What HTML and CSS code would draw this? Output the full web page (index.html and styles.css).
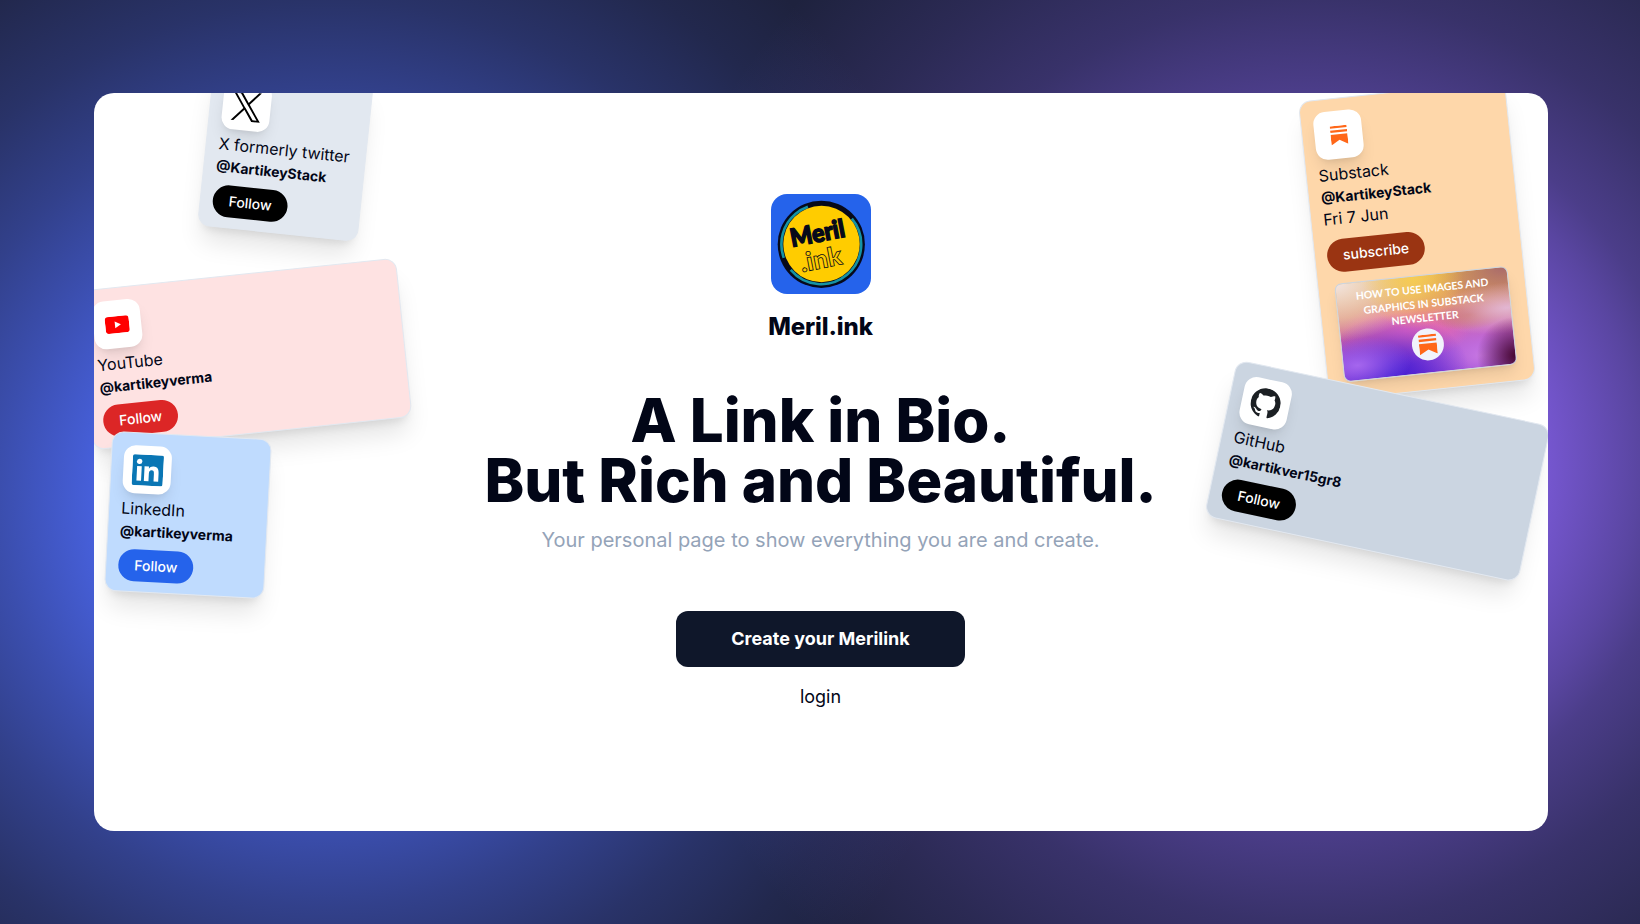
FILE: index.html
```html
<!DOCTYPE html>
<html lang="en">
<head>
<meta charset="utf-8">
<title>Meril.ink</title>
<link rel="stylesheet" href="styles.css">
</head>
<body>
<main class="panel">
  <section class="card card-x">
    <div class="icon"><svg width="32" height="32" viewBox="0 0 24 24"><path d="M14.1 10.3 22.3 1h-2l-7.1 8.1L7.6 1H1l8.6 12.3L1 23h2l7.500-8.600 6 8.600H23zm-2.700 3-.9-1.200L3.700 2.400h3l5.600 7.900.9 1.200 7.200 10.200h-3z"/></svg></div>
    <p class="title">X formerly twitter</p>
    <p class="handle">@KartikeyStack</p>
    <button class="pill black">Follow</button>
  </section>
  <section class="card card-youtube">
    <div class="icon"><svg width="24" height="17" viewBox="0 0 24 17"><rect width="24" height="17" rx="3.500" fill="#f00"/><path d="M9.700 5v7l6-3.500z" fill="#fff"/></svg></div>
    <p class="title">YouTube</p>
    <p class="handle">@kartikeyverma</p>
    <button class="pill red">Follow</button>
  </section>
  <section class="card card-linkedin">
    <div class="icon"><svg width="31" height="31" viewBox="0 0 30 30"><rect width="30" height="30" rx="2" fill="#0a76b4"/><g fill="#fff"><circle cx="6.700" cy="6.800" r="2.600"/><path d="M4.500 11.300h4.500v14.200H4.500zM11.700 11.300H16v2c.8-1.400 2.300-2.300 4.300-2.300 4.400 0 5.300 2.900 5.300 6.700v7.800h-4.500v-7c0-1.600 0-3.700-2.200-3.700s-2.700 1.800-2.700 3.600v7.100h-4.500z"/></g></svg></div>
    <p class="title">LinkedIn</p>
    <p class="handle">@kartikeyverma</p>
    <button class="pill blue">Follow</button>
  </section>
  <section class="card card-substack">
    <div class="icon"><svg width="17" height="19" viewBox="0 0 17 19" fill="#ff6719"><path d="M0 0h17v2.200H0zM0 4.200h17v2.300H0zM0 8.500h17V19l-8.500-4.700L0 19z"/></svg></div>
    <p class="title">Substack</p>
    <p class="handle">@KartikeyStack</p>
    <p class="title date">Fri 7 Jun</p>
    <button class="pill rust">subscribe</button>
    <div class="thumb">
      <p>HOW TO USE IMAGES AND<br>GRAPHICS IN SUBSTACK<br>NEWSLETTER</p>
      <span class="badge"><svg width="18" height="20" viewBox="0 0 17 19" fill="#ff6719"><path d="M0 0h17v2.200H0zM0 4.200h17v2.300H0zM0 8.500h17V19l-8.500-4.700L0 19z"/></svg></span>
    </div>
  </section>
  <section class="card card-github">
    <div class="icon"><svg width="30" height="30" viewBox="0 0 16 16" fill="#1b1f23"><path d="M8 0C3.580 0 0 3.580 0 8c0 3.540 2.290 6.530 5.470 7.590.4.070.55-.17.55-.38 0-.19-.01-.82-.01-1.490-2.010.37-2.530-.49-2.690-.94-.09-.23-.48-.94-.82-1.130-.28-.15-.68-.52-.01-.53.63-.01 1.080.58 1.230.82.72 1.210 1.870.87 2.330.66.07-.52.28-.87.51-1.070-1.780-.2-3.640-.89-3.640-3.950 0-.87.31-1.590.82-2.150-.08-.2-.36-1.020.08-2.120 0 0 .67-.21 2.200.82.64-.18 1.320-.27 2-.27s1.360.09 2 .27c1.530-1.040 2.200-.82 2.200-.82.44 1.100.16 1.920.08 2.120.51.56.82 1.270.82 2.150 0 3.070-1.870 3.750-3.650 3.950.29.25.54.73.54 1.480 0 1.070-.01 1.930-.01 2.200 0 .21.15.46.55.38A8.010 8.010 0 0 0 16 8c0-4.420-3.580-8-8-8z"/></svg></div>
    <p class="title">GitHub</p>
    <p class="handle">@kartikver15gr8</p>
    <button class="pill black">Follow</button>
  </section>

  <div class="hero">
    <svg class="logo" width="100" height="100" viewBox="0 0 100 100">
      <rect width="100" height="100" rx="16" fill="#2563eb"/>
      <circle cx="50.300" cy="50.300" r="43.600" fill="#06091a"/>
      <circle cx="50.300" cy="50.300" r="39.900" fill="none" stroke="#1593a5" stroke-width="2.600" stroke-dasharray="125.300 13.900 62.700 48.800" transform="rotate(-40 50.300 50.300)"/>
      <circle cx="50.500" cy="50" r="38.200" fill="#fc0"/>
      <g transform="rotate(-11 50 50)" font-family="Lato, sans-serif" font-weight="900" text-anchor="middle">
        <text x="48.500" y="47.500" font-size="25" textLength="55" lengthAdjust="spacingAndGlyphs" fill="#06091a" stroke="#06091a" stroke-width="1.500">Meril</text>
        <text x="47" y="74" font-size="26" textLength="42" lengthAdjust="spacingAndGlyphs" fill="none" stroke="#06091a" stroke-width=".8">.ink</text>
      </g>
    </svg>
    <p class="brand">Meril.ink</p>
    <h1>A Link in Bio.<br>But Rich and Beautiful.</h1>
    <p class="tagline">Your personal page to show everything you are and create.</p>
    <button class="cta">Create your Merilink</button>
    <a class="login">login</a>
  </div>
</main>
</body>
</html>
```
FILE: styles.css
```css
* { box-sizing: border-box; margin: 0; }
body {
  height: 924px;
  padding: 93px 92px 93px 94px;
  overflow: hidden;
  font-family: Inter, sans-serif;
  color: #020617;
  background:
    radial-gradient(circle at 328px 500px, rgb(80,110,255) 150px, rgba(80,110,255,.81) 234px, rgba(80,110,255,.58) 328px, rgba(80,110,255,.4) 407px, rgba(80,110,255,.22) 500px, rgba(80,110,255,.08) 598px, rgba(80,110,255,0) 680px),
    radial-gradient(circle at 1312px 460px, rgb(140,100,245) 150px, rgba(140,100,245,.79) 237px, rgba(140,100,245,.54) 328px, rgba(140,100,245,.41) 369px, rgba(140,100,245,.24) 463px, rgba(140,100,245,.12) 565px, rgba(140,100,245,0) 690px),
    #1e223e;
}
.panel {
  position: relative;
  height: 738px;
  overflow: hidden;
  border-radius: 20px;
  background: #fff;
}
.card {
  position: absolute;
  display: flex;
  flex-direction: column;
  align-items: flex-start;
  width: 160px;
  height: 160px;
  padding: 12px;
  border: 1px solid #e2e8f0;
  border-radius: 12px;
  box-shadow: 0 20px 25px -5px rgba(0,0,0,.1), 0 8px 10px -6px rgba(0,0,0,.1);
}
.card-x { left: 110.500px; top: -19.500px; width: 160.500px; background: #e2e8f0; transform: rotate(6deg); }
.card-youtube { left: -9.700px; top: 180.500px; width: 320.500px; background: #fee2e2; transform: rotate(-6deg); }
.card-linkedin { left: 14.200px; top: 341.700px; background: #bfdbfe; transform: rotate(3deg); }
.card-substack { left: 1219px; top: -2.800px; width: 208px; height: 301px; background: #fed7aa; transform: rotate(-6deg); }
.card-github { left: 1122.500px; top: 298.400px; width: 320.500px; background: #cbd5e1; transform: rotate(12deg); }
.icon {
  display: grid;
  place-items: center;
  flex: none;
  width: 48px;
  height: 48px;
  margin-bottom: 3px;
  border-radius: 12px;
  background: #fff;
  box-shadow: 0 10px 15px -3px rgba(0,0,0,.1), 0 4px 6px -4px rgba(0,0,0,.1);
}
.title { font-size: 16px; line-height: 24px; white-space: nowrap; }
.handle { margin-top: 1px; font-size: 14px; line-height: 20px; font-weight: 700; }
.date { line-height: 23px; }
.pill {
  flex: none;
  height: 32.500px;
  margin-top: 7.700px;
  padding: 0 16px;
  border: 0;
  border-radius: 17px;
  font: 500 14px/32px Inter, sans-serif;
  color: #fff;
}
.black { background: #000; }
.red { background: #dc2626; }
.blue { background: #2563eb; }
.rust { background: #9a3412; margin-top: 9px; }
.thumb {
  display: flex;
  flex-direction: column;
  align-items: center;
  flex: none;
  width: 174px;
  height: 99px;
  margin: 11.500px 0 0 4px;
  padding-top: 6px;
  border: 1px solid #cbd5e1;
  border-radius: 7px;
  box-shadow: 0 10px 15px -3px rgba(0,0,0,.1), 0 4px 6px -4px rgba(0,0,0,.1);
  background:
    radial-gradient(ellipse at 45% 0, #f6cc52 0, rgba(246,204,82,0) 38%),
    radial-gradient(ellipse at 0 0, #f2e3e0 0, rgba(242,227,224,0) 42%),
    radial-gradient(circle at 100% 92%, #46072f 0, rgba(70,7,47,0) 20%),
    radial-gradient(ellipse at 98% 42%, #e2b6d2 0, rgba(226,182,210,0) 32%),
    radial-gradient(ellipse at 76% 45%, #c25a50 0, rgba(194,90,80,0) 20%),
    radial-gradient(ellipse at 98% 0, #a96a6c 0, rgba(215,150,80,0) 30%),
    radial-gradient(ellipse at 8% 85%, #a566ee 0, rgba(165,102,238,0) 24%),
    radial-gradient(ellipse at 27% 98%, #4420d4 0, rgba(68,32,212,0) 44%),
    radial-gradient(ellipse at 38% 55%, #f06abf 0, rgba(240,106,191,0) 44%),
    radial-gradient(ellipse at 80% 88%, #c777e2 0, rgba(199,119,226,0) 40%),
    linear-gradient(#e2ac50, #dd9070 35%, #c95ba8 60%, #9c3fd0 82%, #7427cb);
}
.thumb p {
  font: 700 10.450px/14.500px Lato, sans-serif;
  text-align: center;
  white-space: nowrap;
  color: #fff;
}
.badge {
  display: grid;
  place-items: center;
  width: 32px;
  height: 32px;
  margin-top: 3px;
  border-radius: 50%;
  background: #f1f3fb;
}
.hero {
  display: flex;
  flex-direction: column;
  align-items: center;
  padding: 101px 1px 0 0;
  text-align: center;
}
.logo { display: block; }
.brand { margin-top: 17px; font-size: 24px; line-height: 32px; font-weight: 800; letter-spacing: -.1px; }
h1 { margin-top: 47px; font-size: 60px; line-height: 60px; font-weight: 800; letter-spacing: -.04px; }
.tagline { margin-top: 16px; font-size: 20px; line-height: 28px; color: #94a3b8; }
.cta {
  width: 289px;
  height: 56px;
  margin-top: 56.500px;
  border: 0;
  border-radius: 12px;
  background: #0f172a;
  color: #fff;
  font: 700 18px/28px Inter, sans-serif;
}
.login { margin-top: 16.500px; font-size: 18px; line-height: 28px; }
```
